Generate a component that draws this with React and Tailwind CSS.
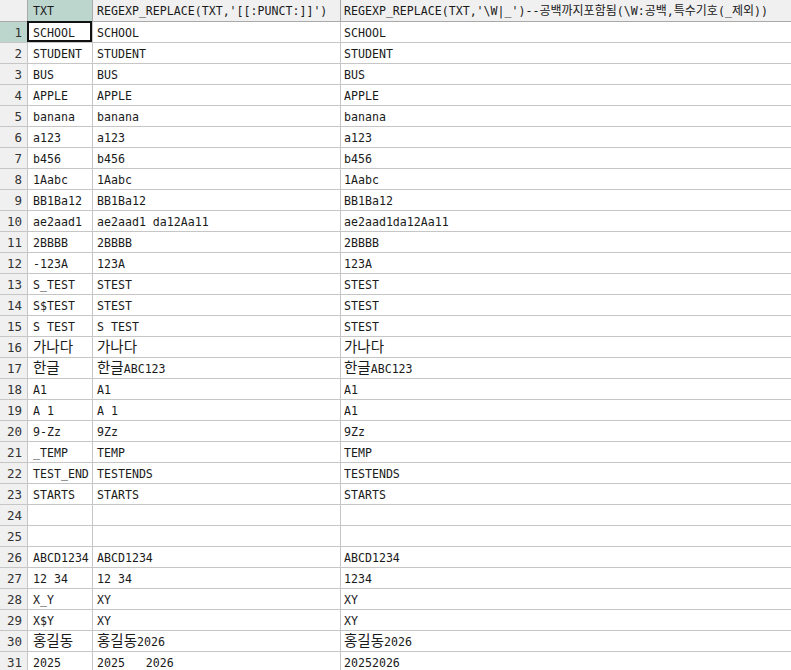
const ROWS = [
  ['SCHOOL', 'SCHOOL', 'SCHOOL'],
  ['STUDENT', 'STUDENT', 'STUDENT'],
  ['BUS', 'BUS', 'BUS'],
  ['APPLE', 'APPLE', 'APPLE'],
  ['banana', 'banana', 'banana'],
  ['a123', 'a123', 'a123'],
  ['b456', 'b456', 'b456'],
  ['1Aabc', '1Aabc', '1Aabc'],
  ['BB1Ba12', 'BB1Ba12', 'BB1Ba12'],
  ['ae2aad1', 'ae2aad1 da12Aa11', 'ae2aad1da12Aa11'],
  ['2BBBB', '2BBBB', '2BBBB'],
  ['-123A', '123A', '123A'],
  ['S_TEST', 'STEST', 'STEST'],
  ['S$TEST', 'STEST', 'STEST'],
  ['S TEST', 'S TEST', 'STEST'],
  ['가나다', '가나다', '가나다'],
  ['한글', '한글ABC123', '한글ABC123'],
  ['A1', 'A1', 'A1'],
  ['A 1', 'A 1', 'A1'],
  ['9-Zz', '9Zz', '9Zz'],
  ['_TEMP', 'TEMP', 'TEMP'],
  ['TEST_END', 'TESTENDS', 'TESTENDS'],
  ['STARTS', 'STARTS', 'STARTS'],
  ['', '', ''],
  ['', '', ''],
  ['ABCD1234', 'ABCD1234', 'ABCD1234'],
  ['12 34', '12 34', '1234'],
  ['X_Y', 'XY', 'XY'],
  ['X$Y', 'XY', 'XY'],
  ['홍길동', '홍길동2026', '홍길동2026'],
  ['2025', '2025   2026', '20252026'],
];

// hangul runs are set a bit larger, like the grid's korean fallback font
function Txt({ value, small }) {
  const parts = value.split(/([\uAC00-\uD7A3]+)/).filter(Boolean);
  return (
    <>
      {parts.map((p, i) =>
        /[\uAC00-\uD7A3]/.test(p) ? (
          <span key={i} className={`${small ? 'text-[12px]' : 'text-[14.5px]'} relative -top-[1px]`}>{p}</span>
        ) : (
          <span key={i}>{p}</span>
        )
      )}
    </>
  );
}

export default function App() {
  return (
    <div
      className="w-[791px] h-[670px] overflow-hidden bg-white text-[11.6px] text-[#1a1a1a] whitespace-pre"
      style={{ fontFamily: '"DejaVu Sans Mono", "Noto Sans CJK KR", monospace' }}
    >
      <div className="grid grid-cols-[28px_65px_248px_1fr]">
        {/* header */}
        <div className="h-[22px] bg-[#f0f0f0] border-r border-b border-[#a9a9a9]" />
        <div className="h-[22px] bg-[#bdd6cd] border-r border-b border-[#a9a9a9] pl-[5px] pt-[3px] flex items-center">TXT</div>
        <div className="h-[22px] bg-[#f0f0f0] border-r border-b border-[#a9a9a9] pl-[4px] pt-[3px] flex items-center">
          REGEXP_REPLACE(TXT,'[[:PUNCT:]]')
        </div>
        <div className="h-[22px] bg-[#f0f0f0] border-b border-[#a9a9a9] pl-[3px] pt-[3px] flex items-center">
          <Txt small value={"REGEXP_REPLACE(TXT,'\\W|_')--공백까지포함됨(\\W:공백,특수기호(_제외))"} />
        </div>

        {ROWS.map((r, i) => (
          <Row key={i} n={i + 1} cells={r} />
        ))}
      </div>
    </div>
  );
}

function Row({ n, cells }) {
  const active = n === 1;
  return (
    <>
      <div
        className={`h-[21px] border-r border-b border-[#c6c6c6] flex items-center justify-end pr-[5px] pt-[3px] text-[#333] text-[12.5px] ${
          active ? 'bg-[#bdd6cd]' : 'bg-[#f0f0f0]'
        }`}
      >
        {n}
      </div>
      <div className="relative h-[21px] border-r border-b border-[#c6c6c6] flex items-center pl-[5px] pt-[4px]">
        {active && <div className="absolute -left-px -top-px right-0 bottom-0 border-2 border-[#111]" />}
        <Txt value={cells[0]} />
      </div>
      <div className="h-[21px] border-r border-b border-[#c6c6c6] flex items-center pl-[4px] pt-[4px]">
        <Txt value={cells[1]} />
      </div>
      <div className="h-[21px] border-b border-[#c6c6c6] flex items-center pl-[3px] pt-[4px]">
        <Txt value={cells[2]} />
      </div>
    </>
  );
}
